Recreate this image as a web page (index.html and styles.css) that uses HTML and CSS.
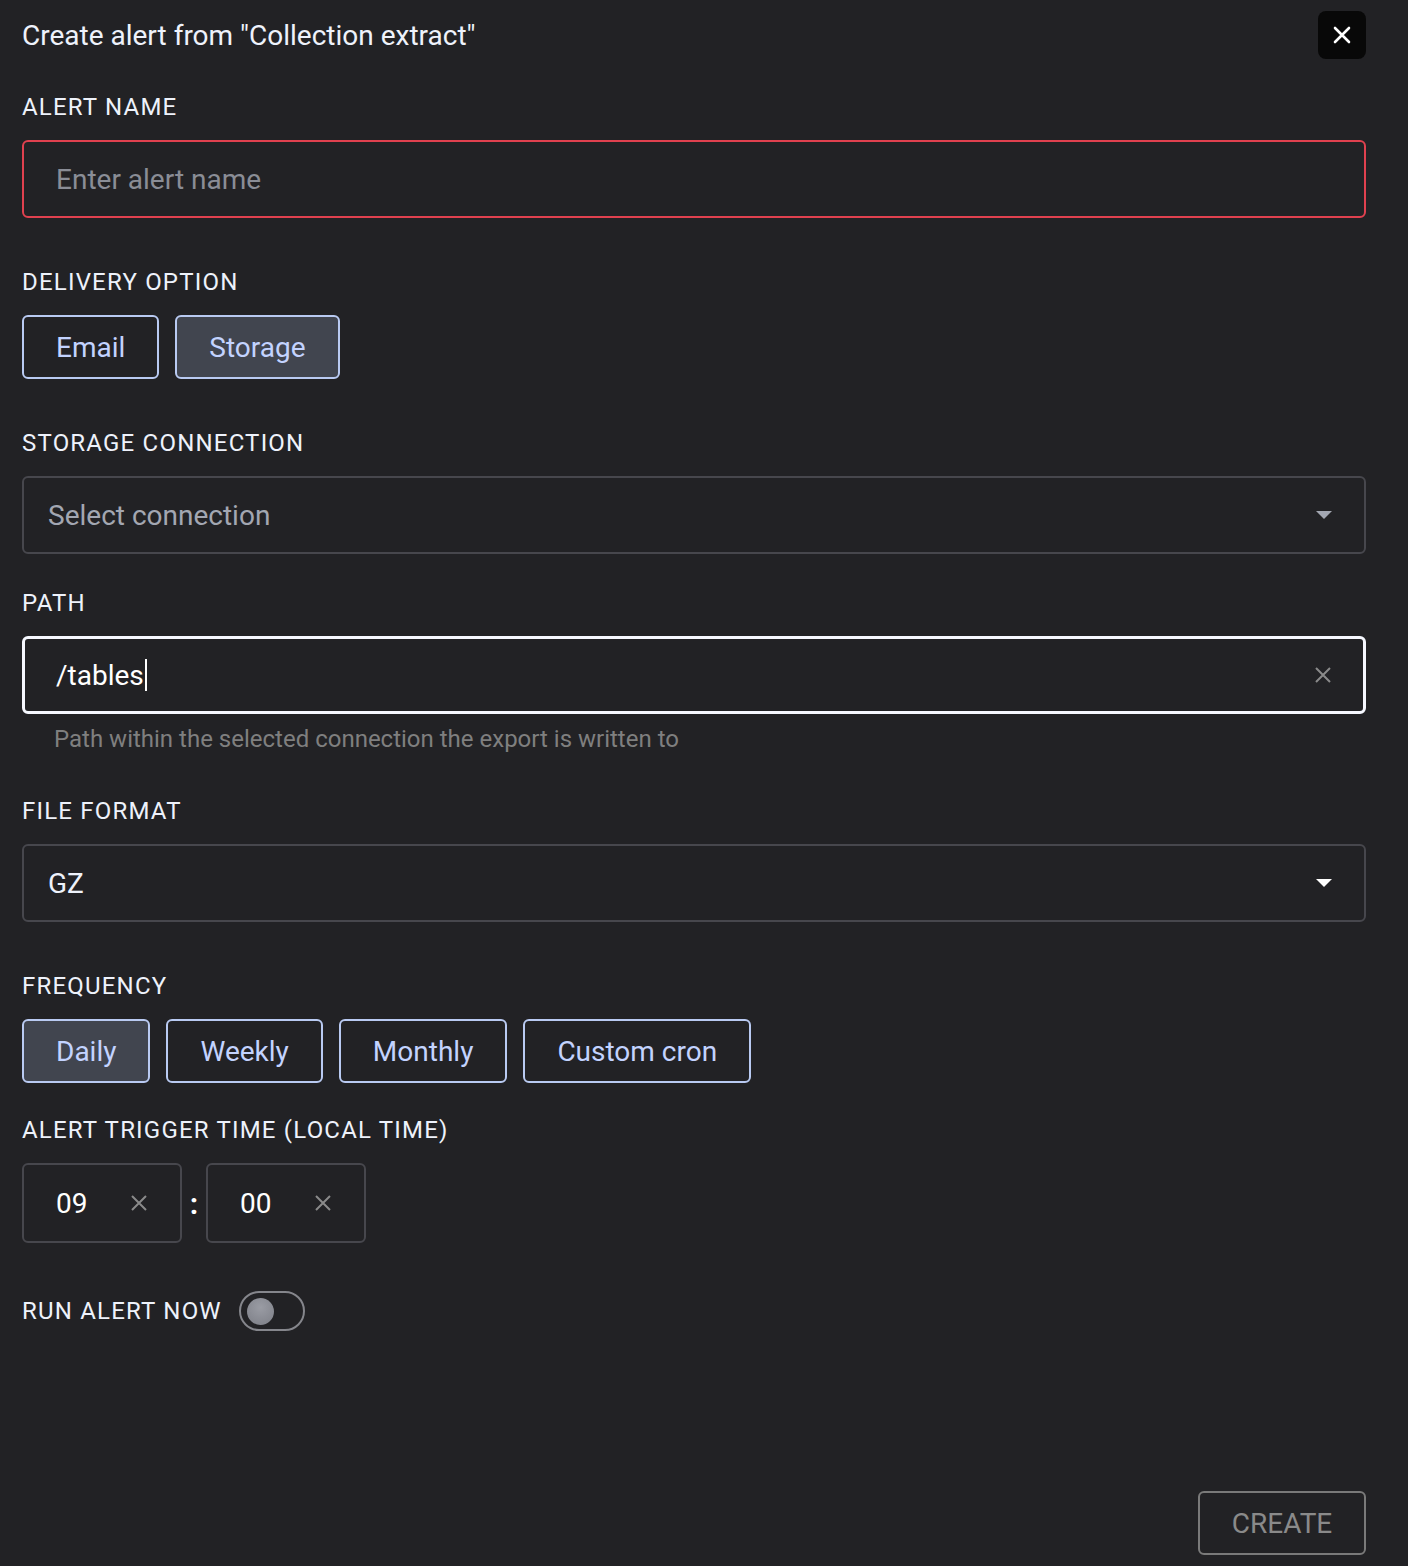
FILE: index.html
```html
<!DOCTYPE html>
<html lang="en">
<head>
    <meta charset="UTF-8">
    <meta name="viewport" content="width=device-width, initial-scale=1.0">
    <title>Create alert</title>
    <link rel="stylesheet" href="styles.css">
</head>
<body>
    <div class="dialog">
        <header class="dialog-header">
            <h1>Create alert from "Collection extract"</h1>
            <button class="close-button" aria-label="Close">
                <svg width="20" height="20" viewBox="0 0 20 20"><path d="M3 3 L17 17 M17 3 L3 17" stroke="#fff" stroke-width="2.6" stroke-linecap="round"/></svg>
            </button>
        </header>

        <div class="field">
            <label class="field-label">Alert name</label>
            <div class="text-box error">
                <span class="placeholder">Enter alert name</span>
            </div>
        </div>

        <div class="field spaced">
            <label class="field-label">Delivery option</label>
            <div class="toggle-group">
                <button class="option">Email</button>
                <button class="option selected">Storage</button>
            </div>
        </div>

        <div class="field spaced">
            <label class="field-label">Storage connection</label>
            <div class="select-box">
                <span class="select-value muted">Select connection</span>
                <svg class="caret" width="16" height="8" viewBox="0 0 16 8"><path d="M0 0 H16 L8 8 Z" fill="#a3a7b2"/></svg>
            </div>
        </div>

        <div class="field path-field">
            <label class="field-label">Path</label>
            <div class="text-box focused">
                <span class="value">/tables<span class="cursor"></span></span>
                <svg class="clear" width="18" height="18" viewBox="0 0 18 18"><path d="M2 2 L16 16 M16 2 L2 16" stroke="#8a8a8a" stroke-width="2"/></svg>
            </div>
            <p class="helper">Path within the selected connection the export is written to</p>
        </div>

        <div class="field after-helper">
            <label class="field-label">File format</label>
            <div class="select-box">
                <span class="select-value">GZ</span>
                <svg class="caret" width="16" height="8" viewBox="0 0 16 8"><path d="M0 0 H16 L8 8 Z" fill="#ffffff"/></svg>
            </div>
        </div>

        <div class="field spaced">
            <label class="field-label">Frequency</label>
            <div class="toggle-group">
                <button class="option selected">Daily</button>
                <button class="option">Weekly</button>
                <button class="option">Monthly</button>
                <button class="option">Custom cron</button>
            </div>
        </div>

        <div class="field trigger-field">
            <label class="field-label">Alert trigger time (local time)</label>
            <div class="time-row">
                <div class="time-box">
                    <span>09</span>
                    <svg width="18" height="18" viewBox="0 0 18 18"><path d="M2 2 L16 16 M16 2 L2 16" stroke="#8a8a8a" stroke-width="2"/></svg>
                </div>
                <span class="colon">:</span>
                <div class="time-box">
                    <span>00</span>
                    <svg width="18" height="18" viewBox="0 0 18 18"><path d="M2 2 L16 16 M16 2 L2 16" stroke="#8a8a8a" stroke-width="2"/></svg>
                </div>
            </div>
        </div>

        <div class="run-now">
            <span class="field-label inline">Run alert now</span>
            <span class="switch"><span class="knob"></span></span>
        </div>

        <footer class="dialog-footer">
            <button class="create-button" disabled>CREATE</button>
        </footer>
    </div>
</body>
</html>
```

FILE: styles.css
```css
* {
    box-sizing: border-box;
}

body {
    margin: 0;
    background-color: #222225;
    font-family: Roboto, "Liberation Sans", Arial, sans-serif;
    color: #eef2fb;
}

.dialog {
    min-height: 100vh;
    display: flex;
    flex-direction: column;
    padding: 11px 42px 11px 22px;
}

.dialog-header {
    display: flex;
    align-items: center;
    justify-content: space-between;
    height: 48px;
}

.dialog-header h1 {
    margin: 0;
    font-size: 28px;
    font-weight: 400;
    color: #eef2fb;
}

.close-button {
    width: 48px;
    height: 48px;
    border: none;
    border-radius: 8px;
    background-color: #080808;
    display: flex;
    align-items: center;
    justify-content: center;
    padding: 0;
}

.field {
    margin-top: 32px;
}

.field.spaced {
    margin-top: 48px;
}

.field.path-field {
    margin-top: 33px;
}

.field.after-helper {
    margin-top: 40px;
}

.field.trigger-field {
    margin-top: 31px;
}

.field-label {
    display: block;
    font-size: 24px;
    line-height: 32px;
    letter-spacing: 1.2px;
    text-transform: uppercase;
    color: #eef2fb;
    margin-bottom: 17px;
}

.field-label.inline {
    display: inline-block;
    margin: 0;
}

.text-box,
.select-box {
    height: 78px;
    border-radius: 6px;
    display: flex;
    align-items: center;
    font-size: 28px;
}

.text-box {
    padding: 0 32px 0 32px;
}

.text-box.error {
    border: 2px solid #e0414f;
}

.text-box.focused {
    border: 3px solid #f6f8ff;
    padding-left: 31px;
    padding-right: 31px;
}

.placeholder {
    color: #8a8d96;
}

.value {
    flex: 1;
    color: #ffffff;
    display: flex;
    align-items: center;
}

.cursor {
    display: inline-block;
    width: 2px;
    height: 32px;
    background-color: #ffffff;
    margin-left: 1px;
}

.select-box {
    border: 2px solid #47474d;
    padding: 0 32px 0 24px;
    justify-content: space-between;
}

.select-value {
    color: #eef2fb;
}

.select-value.muted {
    color: #a3a7b2;
}

.helper {
    margin: 9px 0 0 32px;
    font-size: 24px;
    line-height: 32px;
    color: #7f7f7f;
}

.toggle-group {
    display: flex;
    gap: 16px;
}

.option {
    height: 64px;
    padding: 0 32px;
    border: 2px solid #b9caf2;
    border-radius: 6px;
    background-color: transparent;
    color: #c3d3ff;
    font-family: inherit;
    font-size: 28px;
}

.option.selected {
    background-color: #41454f;
}

.time-row {
    display: flex;
    align-items: center;
}

.time-box {
    width: 160px;
    height: 80px;
    border: 2px solid #47474d;
    border-radius: 6px;
    display: flex;
    align-items: center;
    justify-content: space-between;
    padding: 0 32px 0 32px;
    font-size: 28px;
    color: #ffffff;
}

.colon {
    width: 24px;
    text-align: center;
    font-size: 30px;
    font-weight: 700;
    color: #ffffff;
}

.run-now {
    margin-top: 48px;
    display: flex;
    align-items: center;
    gap: 17px;
    height: 40px;
}

.switch {
    width: 66px;
    height: 40px;
    border: 2px solid #85868c;
    border-radius: 20px;
    display: flex;
    align-items: center;
    padding-left: 6px;
}

.knob {
    width: 27px;
    height: 27px;
    border-radius: 50%;
    background: radial-gradient(circle at 50% 35%, #9a9ca4, #7c7e86);
}

.dialog-footer {
    margin-top: auto;
    display: flex;
    justify-content: flex-end;
}

.create-button {
    width: 168px;
    height: 64px;
    border: 2px solid #7a7a7a;
    border-radius: 6px;
    background-color: transparent;
    color: #8a8a8a;
    font-family: inherit;
    font-size: 28px;
}
```
